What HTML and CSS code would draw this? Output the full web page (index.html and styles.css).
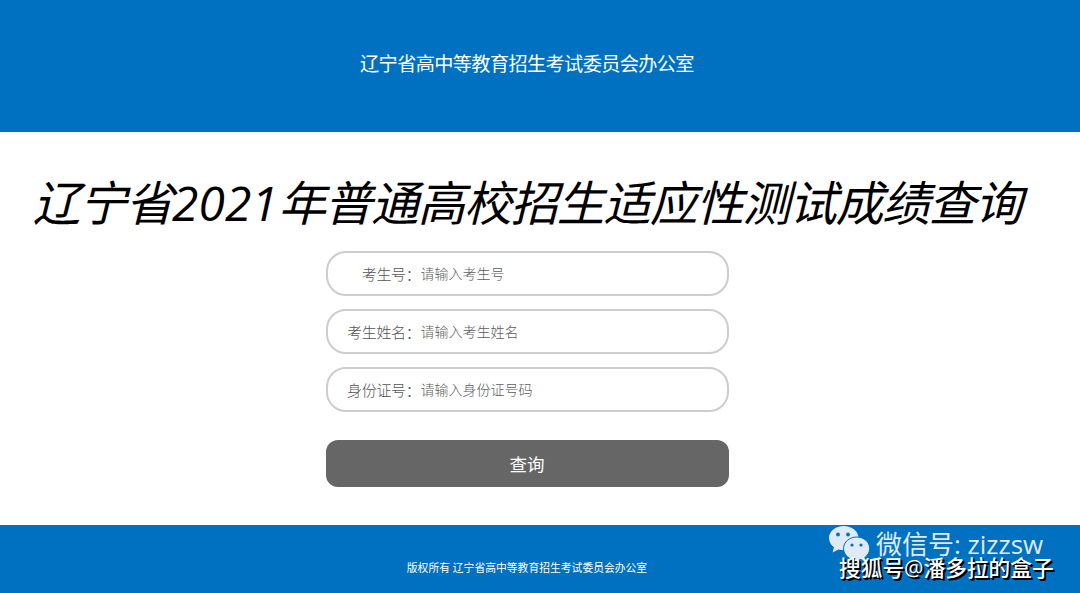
FILE: index.html
```html
<!DOCTYPE html>
<html lang="zh-CN">
<head>
  <meta charset="UTF-8">
  <meta name="viewport" content="width=device-width, initial-scale=1.0">
  <title>成绩查询</title>
  <link rel="stylesheet" href="styles.css">
</head>
<body>
  <header class="header">
    <span class="header-text">辽宁省高中等教育招生考试委员会办公室</span>
  </header>

  <main class="main">
    <h1 class="title">辽宁省<span class="year">2021</span>年普通高校招生适应性测试成绩查询</h1>
    <form class="form">
      <div class="field">
        <label class="label" for="ksh">考生号：</label>
        <input class="input" id="ksh" type="text" placeholder="请输入考生号">
      </div>
      <div class="field">
        <label class="label" for="xm">考生姓名：</label>
        <input class="input" id="xm" type="text" placeholder="请输入考生姓名">
      </div>
      <div class="field">
        <label class="label" for="sfzh">身份证号：</label>
        <input class="input" id="sfzh" type="text" placeholder="请输入身份证号码">
      </div>
      <button class="btn" type="button">查询</button>
    </form>
  </main>

  <footer class="footer">
    <span class="footer-text">版权所有 辽宁省高中等教育招生考试委员会办公室</span>
  </footer>

  <div class="wechat">
    <svg class="wechat-icon" width="42" height="38" viewBox="0 0 42 38">
      <path fill="#deebf7" d="M15.500 1C7.500 1 1 6.200 1 13c0 4 2 7 5 9.300L4.500 27.500l6-3c1.500.4 3 .6 5 .6C24 25 30.500 20 30.500 13S24 1 15.500 1z"/>
      <circle cx="10" cy="9.500" r="1.900" fill="#0070c0"/>
      <circle cx="20" cy="9.500" r="1.900" fill="#0070c0"/>
      <path fill="#deebf7" stroke="#0070c0" stroke-width="1" d="M28.700 12C21.500 12 15.500 17 15.500 23.500s6 11.500 13.200 11.500c1.500 0 3-.2 4.300-.6l5 2.600-1.300-4.400c2.800-2 5-5.200 5-9.100C41.700 17 36 12 28.700 12z"/>
      <circle cx="24" cy="20" r="1.600" fill="#0070c0"/>
      <circle cx="33" cy="20" r="1.600" fill="#0070c0"/>
    </svg>
    <span class="wechat-text">微信号: zizzsw</span>
  </div>
  <div class="sohu">搜狐号@潘多拉的盒子</div>
</body>
</html>
```
FILE: styles.css
```css
body {
  margin: 0;
  height: 593px;
  display: flex;
  flex-direction: column;
  position: relative;
  overflow: hidden;
  background-color: #fff;
  font-family: "Open Sans", "Noto Sans CJK SC", sans-serif;
}

.header {
  box-sizing: border-box;
  height: 132px;
  padding: 49px 26px 0 0;
  background-color: #0070c0;
  color: #fff;
  text-align: center;
  line-height: 30px;
}

.header-text {
  font-size: 19.2px;
  letter-spacing: -0.64px;
}

.main {
  flex: 1;
  padding-right: 26px;
}

.title {
  margin: 41px 0 0;
  font-size: 47.8px;
  letter-spacing: -1.35px;
  font-style: italic;
  font-weight: 400;
  line-height: 60px;
  color: #000;
  text-align: center;
  white-space: nowrap;
}

.year {
  letter-spacing: 0.2px;
}

.form {
  width: 403px;
  margin: 18px auto 0;
}

.field {
  box-sizing: border-box;
  display: flex;
  align-items: center;
  height: 45px;
  margin-bottom: 13px;
  border: 2px solid #cdcdcd;
  border-radius: 20px;
}

.label {
  width: 93px;
  font-size: 15px;
  letter-spacing: -0.3px;
  font-weight: 300;
  color: #555;
  text-align: right;
  white-space: nowrap;
}

.input {
  flex: 1;
  min-width: 0;
  padding: 0;
  border: 0;
  outline: none;
  background: transparent;
  font-family: inherit;
  font-size: 14px;
  font-weight: 300;
}

.input::placeholder {
  color: #5c5c5c;
}

.btn {
  display: block;
  width: 403px;
  height: 47px;
  margin-top: 28px;
  padding: 0;
  border: 0;
  border-radius: 12px;
  background-color: #666;
  color: #fff;
  font-family: inherit;
  font-size: 17.5px;
  cursor: pointer;
}

.footer {
  box-sizing: border-box;
  height: 68px;
  padding: 32px 26px 0 0;
  background-color: #0070c0;
  color: #fff;
  text-align: center;
  line-height: 18px;
}

.footer-text {
  font-size: 10.8px;
}

/* account marks over the footer corner */
.wechat {
  position: absolute;
  left: 828px;
  top: 525px;
  display: flex;
}

.wechat-text {
  margin-left: 6px;
  font-size: 26px;
  line-height: 38px;
  color: #deebf7;
  white-space: nowrap;
}

.sohu {
  position: absolute;
  left: 839px;
  top: 553px;
  font-size: 21.7px;
  font-weight: 500;
  line-height: 30px;
  color: #fff;
  white-space: nowrap;
  text-shadow: 1px 1px 0 #000, 2px 2px 0 #000;
}
```
